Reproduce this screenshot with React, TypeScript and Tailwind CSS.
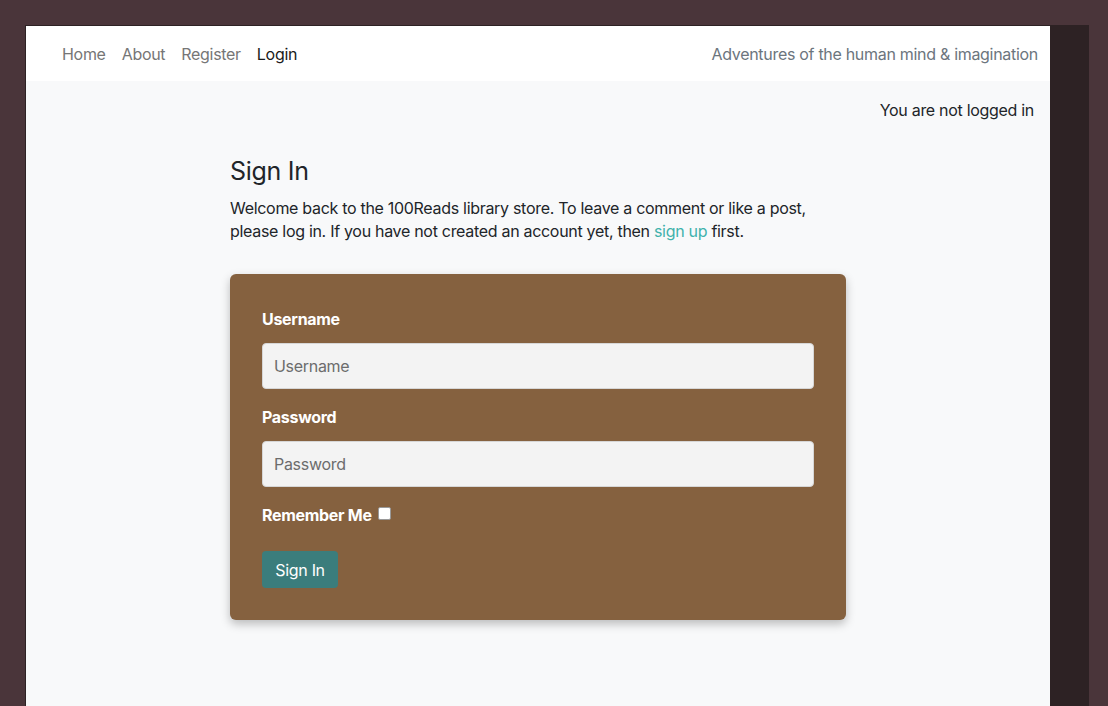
import React from "react";

export default function App() {
  return (
    <div
      className="w-[1108px] h-[706px] overflow-hidden bg-[#4a353a] pt-[25px] pl-[25px] flex tracking-[-0.3px]"
      style={{ fontFamily: "Inter, 'Noto Sans', sans-serif" }}
    >
      <div className="flex h-full">
        <div className="w-[1025px] h-full border-l border-t border-[#2d2224] bg-[#f8f9fa] flex flex-col">
          <nav className="h-[55px] bg-white flex items-center justify-between pl-[36px] pr-[12px] text-[16px]">
            <div className="flex items-center gap-[16px] text-[#767676]">
              <span>Home</span>
              <span>About</span>
              <span>Register</span>
              <span className="text-[#1a1a1a]">Login</span>
            </div>
            <div className="text-[#6c757d]">Adventures of the human mind &amp; imagination</div>
          </nav>
          <div className="flex justify-end pr-[16px] pt-[17px] text-[16px] text-[#212529] leading-[24px]">
            You are not logged in
          </div>
          <div className="w-[616px] mx-auto pt-[34px]">
            <h1 className="text-[25px] leading-[30px] text-[#212529] font-normal">Sign In</h1>
            <p className="mt-[11px] text-[16px] leading-[23px] text-[#212529]">
              Welcome back to the 100Reads library store. To leave a comment or like a post,
              <br />
              please log in. If you have not created an account yet, then{" "}
              <span className="text-[#3fb2ac]">sign up</span> first.
            </p>
            <div className="mt-[31px] bg-[#85613f] rounded-[6px] shadow-[0_4px_10px_rgba(0,0,0,0.25)] px-[32px] pt-[35px] pb-[32px]">
              <div className="text-white font-bold text-[16px] leading-[20px]">Username</div>
              <div className="mt-[14px] h-[46px] bg-[#f3f3f3] rounded-[4px] border border-[#d6d6d6] flex items-center px-[11px] text-[16px] text-[#6c6c6c]">
                Username
              </div>
              <div className="mt-[18px] text-white font-bold text-[16px] leading-[20px]">Password</div>
              <div className="mt-[14px] h-[46px] bg-[#f3f3f3] rounded-[4px] border border-[#d6d6d6] flex items-center px-[11px] text-[16px] text-[#6c6c6c]">
                Password
              </div>
              <div className="mt-[18px] flex items-center gap-[6px] text-white font-bold text-[16px] leading-[20px]">
                <span>Remember Me</span>
                <span className="inline-block w-[13px] h-[13px] bg-white border border-[#999] rounded-[2px] -mt-[4px]"></span>
              </div>
              <div className="mt-[26px] inline-flex items-center justify-center w-[76px] h-[37px] bg-[#3b7d7c] rounded-[4px] text-white text-[16px]">
                Sign In
              </div>
            </div>
          </div>
        </div>
        <div className="w-[39px] h-full bg-[#2d2224]"></div>
      </div>
    </div>
  );
}
